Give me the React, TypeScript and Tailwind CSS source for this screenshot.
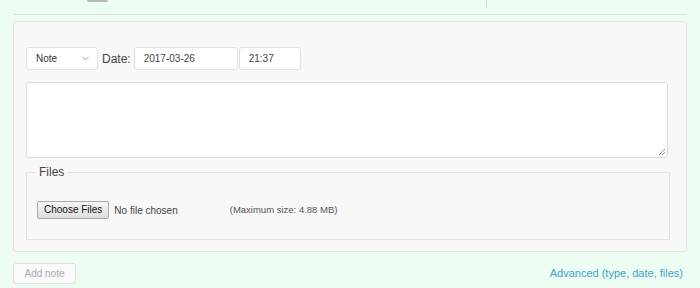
import { ChevronDown } from 'lucide-react';

function App() {
  return (
    <div className="w-[700px] h-[288px] overflow-hidden bg-[#edfdf2] font-['Liberation_Sans',Arial,sans-serif] text-[#333]">
      {/* cut-off content from above */}
      <div className="relative h-[14px]">
        <span className="absolute left-[87px] top-0 w-[21px] h-[2px] bg-[#b9b9b9] rounded-b"></span>
        <span className="absolute left-[486px] top-0 w-px h-[7px] bg-[#d4d4d4]"></span>
      </div>
      <div className="mx-[13px] border-t border-[#d6dfd9]"></div>

      <div className="mt-[6px] mx-[13px] h-[231px] border border-[#e4e4e4] rounded-[3px] bg-[#f8f8f8] pl-[12px] pr-[14px] pt-[25px]">
        <div className="flex items-center h-[23px]">
          <div className="flex items-center justify-between w-[72px] h-[23px] border border-[#e2e2e2] rounded-[3px] bg-white pl-[9px] pr-[6px] text-[10px] text-[#333]">
            <span>Note</span>
            <ChevronDown size={11} strokeWidth={1.5} className="text-[#777]" />
          </div>
          <span className="ml-[4px] mr-[3px] text-[12px] text-[#444]">Date:</span>
          <div className="flex items-center w-[104px] h-[23px] border border-[#e2e2e2] rounded-[3px] bg-white pl-[9px] text-[10px] text-[#444]">2017-03-26</div>
          <div className="ml-px flex items-center w-[62px] h-[23px] border border-[#e2e2e2] rounded-[3px] bg-white pl-[9px] text-[10px] text-[#444]">21:37</div>
        </div>

        <div className="relative mt-[12px] w-[642px] h-[76px] border border-[#dcdcdc] rounded-[3px] bg-white">
          <svg className="absolute right-[1px] bottom-[1px]" width="8" height="8" viewBox="0 0 8 8">
            <path d="M7 1L1 7M7 4L4 7" stroke="#999" strokeWidth="1" />
          </svg>
        </div>

        <fieldset className="mt-[6px] w-[644px] h-[76px] border border-[#e2e2e2] pl-[9px] pr-[10px]">
          <legend className="px-[3px] text-[12px] text-[#444] leading-[16px]">Files</legend>
          <div className="flex items-center mt-[21px] ml-px">
            <button className="h-[18px] px-[6px] border border-[#a9a9a9] rounded-[2px] bg-gradient-to-b from-[#f6f6f6] to-[#dddddd] text-[10px] text-[#111] leading-none">Choose Files</button>
            <span className="ml-[5px] text-[10px] text-[#444]">No file chosen</span>
            <span className="ml-[52px] text-[9.5px] text-[#555]">(Maximum size: 4.88 MB)</span>
          </div>
        </fieldset>
      </div>

      <div className="flex items-center justify-between mt-[11px] ml-[13px] mr-[17px]">
        <button className="w-[63px] h-[21px] border border-[#e2e2e2] rounded-[3px] bg-[#fafafa] text-[10px] text-[#aaa]">Add note</button>
        <a className="text-[11px] text-[#3aa3d3]">Advanced (type, date, files)</a>
      </div>
    </div>
  );
}

export default App;
